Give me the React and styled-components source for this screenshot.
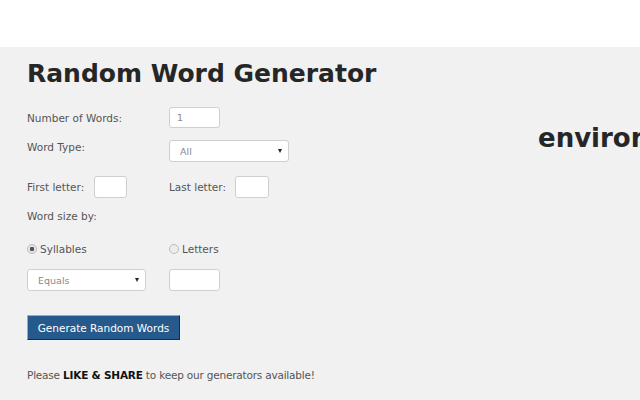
import React, { useState } from 'react'
import styled, { createGlobalStyle } from 'styled-components'

const GlobalStyle = createGlobalStyle`
  html, body {
    margin: 0;
    padding: 0;
    background: #f1f1f1;
    overflow: hidden;
  }
  body {
    font-family: "DejaVu Sans", "Liberation Sans", sans-serif;
  }
`

const Page = styled.div`
  width: 640px;
  height: 400px;
  overflow: hidden;
  background: #f1f1f1;
`

const TopBar = styled.div`
  height: 47px;
  background: #ffffff;
`

const Main = styled.div`
  display: flex;
  padding-left: 27px;
`

const FormColumn = styled.div`
  width: 511px;
  flex-shrink: 0;
`

const ResultColumn = styled.div`
  padding-top: 74px;
  white-space: nowrap;
`

const ResultWord = styled.div`
  font-size: 26px;
  line-height: 34px;
  font-weight: bold;
  color: #262626;
`

const Title = styled.h1`
  margin: 11px 0 0;
  font-size: 25px;
  line-height: 32px;
  font-weight: bold;
  color: #262626;
`

const Row = styled.div`
  display: flex;
  align-items: ${p => p.$align || 'center'};
  margin-top: ${p => p.$gap}px;
`

const Label = styled.label`
  width: ${p => p.$w || 142}px;
  flex-shrink: 0;
  font-size: 10.5px;
  line-height: 14px;
  color: #555;
`

const Text = styled.div`
  font-size: 10.5px;
  line-height: 14px;
  color: #555;
`

const Input = styled.input`
  box-sizing: border-box;
  width: ${p => p.$w}px;
  height: ${p => p.$h || 22}px;
  margin: 0;
  padding: 0 7px;
  border: 1px solid #cfcfcf;
  border-radius: 3px;
  background: #fff;
  font-family: inherit;
  font-size: 9.5px;
  color: #888;
  outline: none;
`

const SelectBox = styled.div`
  box-sizing: border-box;
  width: ${p => p.$w}px;
  height: ${p => p.$h || 22}px;
  display: flex;
  align-items: center;
  justify-content: space-between;
  padding: 0 6px 0 10px;
  border: 1px solid #cfcfcf;
  border-radius: 3px;
  background: #fff;
  font-size: 9.5px;
  color: #888;
`

const Caret = styled.span`
  width: 0;
  height: 0;
  border-left: 2.5px solid transparent;
  border-right: 2.5px solid transparent;
  border-top: 4px solid #222;
`

const RadioLabel = styled.label`
  display: flex;
  align-items: center;
  width: ${p => p.$w || 142}px;
  font-size: 10.5px;
  line-height: 14px;
  color: #555;
`

const RadioDot = styled.span`
  box-sizing: border-box;
  width: 10px;
  height: 10px;
  margin-right: 3px;
  border-radius: 50%;
  border: 1px solid #bdbdbd;
  background: ${p => (p.$on ? 'radial-gradient(circle, #555 0 2px, #e6e6e6 2.5px)' : '#ececec')};
`

const Button = styled.button`
  box-sizing: border-box;
  width: 153px;
  height: 25px;
  margin: 0;
  padding: 0;
  border: 1px solid #1d2b3a;
  border-left-color: #7fb0ea;
  border-top-color: #7fb0ea;
  border-radius: 1px;
  background: #265a8c;
  color: #fff;
  font-family: inherit;
  font-size: 10.5px;
  cursor: pointer;
`

const Note = styled.p`
  margin: 28px 0 0;
  font-size: 10.5px;
  line-height: 14px;
  letter-spacing: -0.2px;
  color: #555;
  b {
    color: #111;
  }
`

export default function App() {
  const [size, setSize] = useState('syllables')
  return (
    <Page>
      <GlobalStyle />
      <TopBar />
      <Main>
        <FormColumn>
          <Title>Random Word Generator</Title>
          <Row $gap={17}>
            <Label>Number of Words:</Label>
            <Input $w={51} $h={21} defaultValue="1" />
          </Row>
          <Row $gap={12} $align="flex-start">
            <Label>Word Type:</Label>
            <SelectBox $w={120} $h={22}>
              <span>All</span>
              <Caret />
            </SelectBox>
          </Row>
          <Row $gap={14}>
            <Label $w={67}>First letter:</Label>
            <Input $w={33} />
            <Label $w={66} style={{ marginLeft: 42 }}>Last letter:</Label>
            <Input $w={34} />
          </Row>
          <Row $gap={11}>
            <Text>Word size by:</Text>
          </Row>
          <Row $gap={19}>
            <RadioLabel onClick={() => setSize('syllables')}>
              <RadioDot $on={size === 'syllables'} />
              Syllables
            </RadioLabel>
            <RadioLabel onClick={() => setSize('letters')}>
              <RadioDot $on={size === 'letters'} />
              Letters
            </RadioLabel>
          </Row>
          <Row $gap={13}>
            <SelectBox $w={119} style={{ marginRight: 23 }}>
              <span>Equals</span>
              <Caret />
            </SelectBox>
            <Input $w={51} />
          </Row>
          <Row $gap={24}>
            <Button>Generate Random Words</Button>
          </Row>
          <Note>
            Please <b>LIKE &amp; SHARE</b> to keep our generators available!
          </Note>
        </FormColumn>
        <ResultColumn>
          <ResultWord>environment</ResultWord>
        </ResultColumn>
      </Main>
    </Page>
  )
}
